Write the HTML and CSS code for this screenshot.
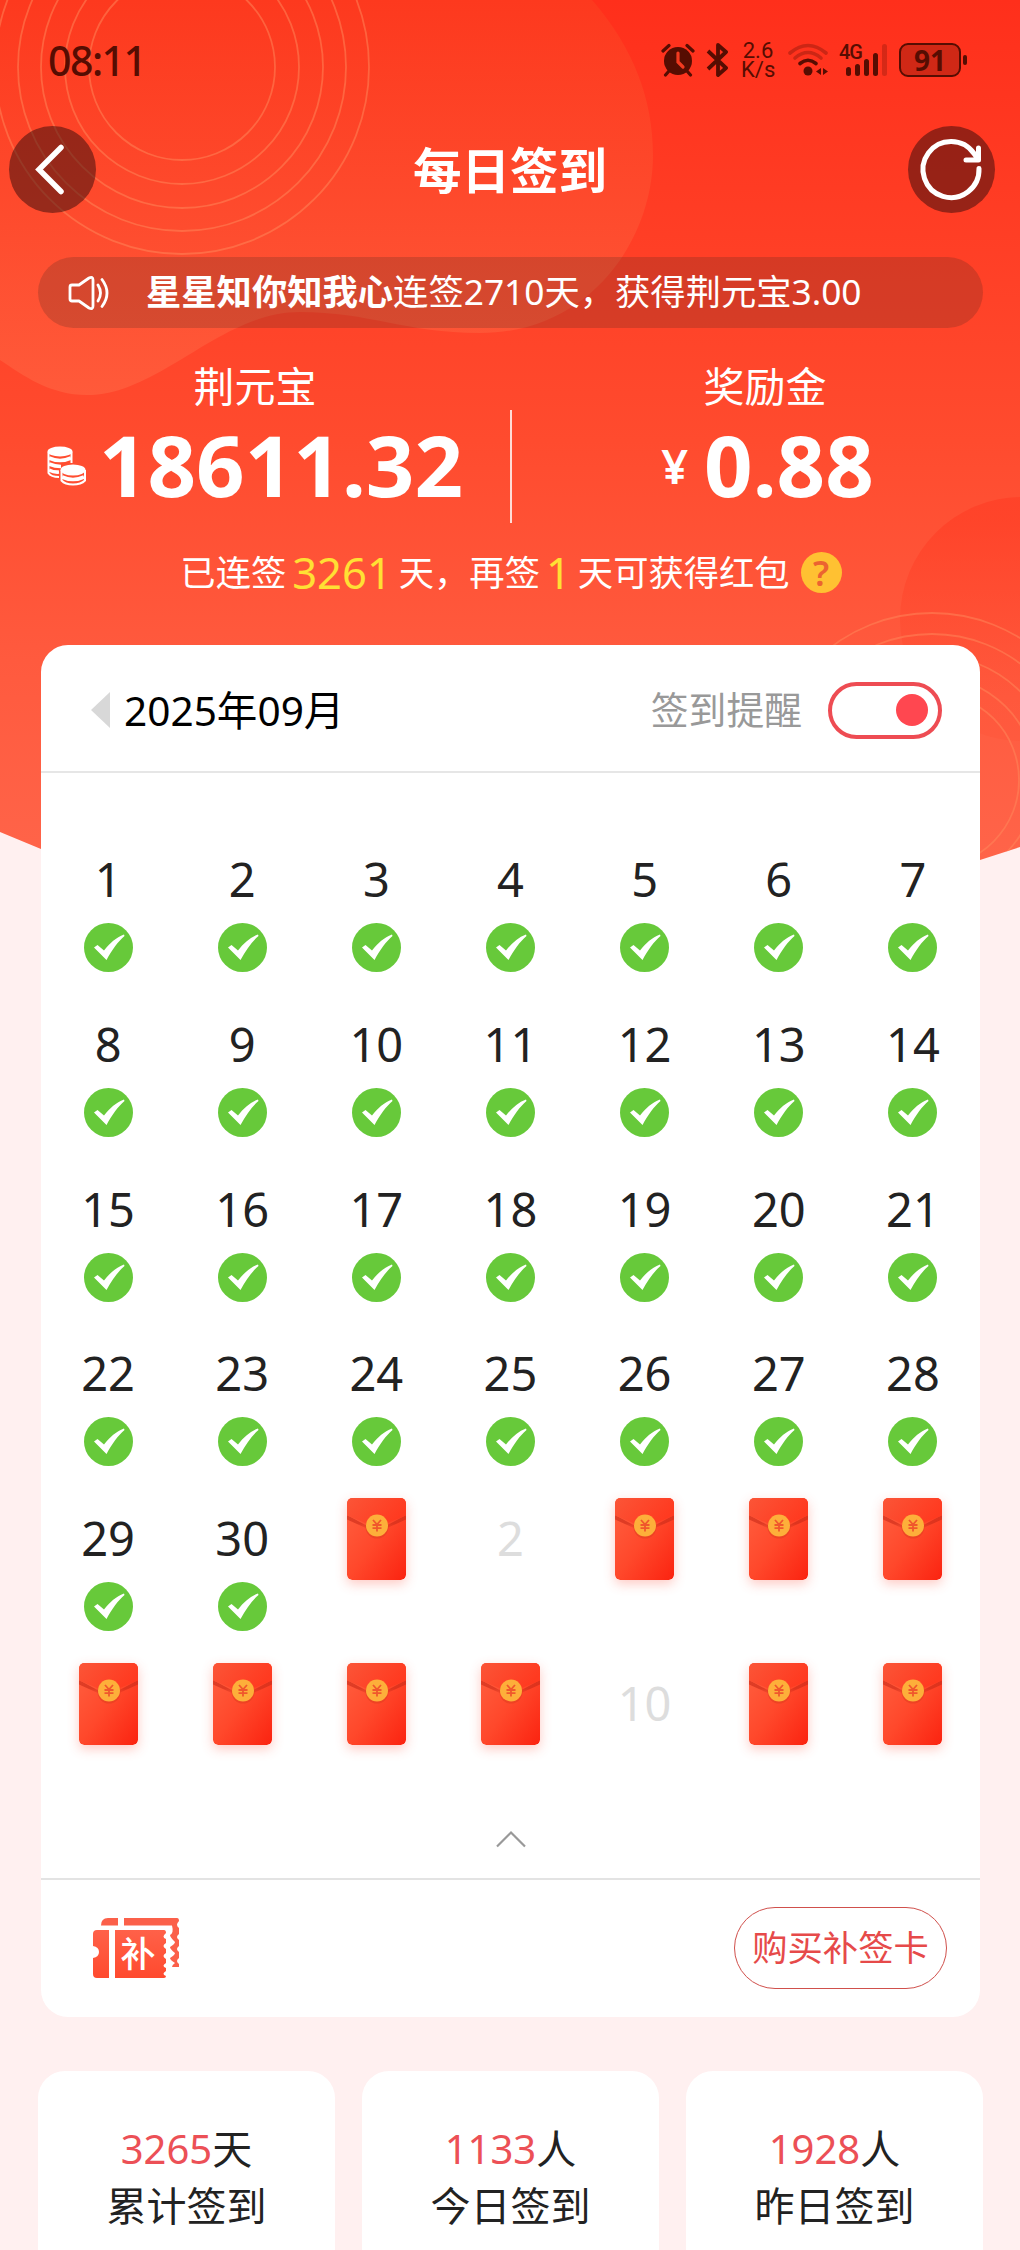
FILE: index.html
```
<!DOCTYPE html>
<html lang="zh-CN">
<head>
    <meta charset="UTF-8">
    <meta name="viewport" content="width=device-width, initial-scale=1.0">
    <title>每日签到</title>
    <link rel="stylesheet" href="styles.css">
</head>
<body>
    <svg class="defs" width="0" height="0">
        <defs>
            <linearGradient id="packet" x1="0" y1="0" x2="1" y2="1">
                <stop offset="0" stop-color="#ff6040"/>
                <stop offset="0.5" stop-color="#ff482b"/>
                <stop offset="1" stop-color="#fb2310"/>
            </linearGradient>
            <linearGradient id="flap" x1="0" y1="0" x2="1" y2="0.4">
                <stop offset="0" stop-color="#fb5537"/>
                <stop offset="1" stop-color="#ff3a20"/>
            </linearGradient>
            <linearGradient id="fold" x1="0" y1="0" x2="0" y2="1">
                <stop offset="0.6" stop-color="#c92a18" stop-opacity="0.6"/>
                <stop offset="1" stop-color="#c92a18" stop-opacity="0.1"/>
            </linearGradient>
        </defs>
        <symbol id="check" viewBox="0 0 49 49">
            <circle cx="24.5" cy="24.5" r="24.5" fill="#67c93a"/>
            <path d="M10 24.5L13.500 22L20 27.500C26 20 32 14.500 40 11.500L40.500 13C34 18.500 28 27 22.500 37Z" fill="#fff"/>
        </symbol>
        <symbol id="redpacket" viewBox="0 0 59 82">
            <rect width="59" height="82" rx="5" fill="url(#packet)"/>
            <path d="M0 17L22 29H37L59 17V21.500L38 31H21L0 21.500Z" fill="url(#fold)"/>
            <path d="M0 5Q0 0 5 0H54Q59 0 59 5V17.500L36 27H23L0 17.500Z" fill="url(#flap)"/>
            <circle cx="30" cy="29" r="11.500" fill="#e2401f" opacity="0.6"/>
            <circle cx="30" cy="27.500" r="11" fill="#fdaf3a"/>
            <path d="M26 22L30 26.500L34 22M30 26.500V33.500M25.500 27H34.500M25.500 30.200H34.500" fill="none" stroke="#f0572c" stroke-width="1.800"/>
        </symbol>
    </svg>

    <div class="page">
        <svg class="backdrop" viewBox="0 0 1020 880" width="1020" height="880">
            <defs>
                <linearGradient id="red" x1="0" y1="0" x2="0" y2="1">
                    <stop offset="0" stop-color="#ff2f1b"/>
                    <stop offset="0.5" stop-color="#ff4b2e"/>
                    <stop offset="0.75" stop-color="#ff5a3e"/>
                    <stop offset="1" stop-color="#ff654a"/>
                </linearGradient>
                <linearGradient id="blob" x1="0" y1="0" x2="0" y2="1">
                    <stop offset="0" stop-color="#fd391e"/>
                    <stop offset="1" stop-color="#ff5a3a"/>
                </linearGradient>
                <linearGradient id="moon" x1="0" y1="0" x2="0" y2="1">
                    <stop offset="0.1" stop-color="#ff3a22" stop-opacity="0.55"/>
                    <stop offset="0.85" stop-color="#ff4a2e" stop-opacity="0.2"/>
                </linearGradient>
                <clipPath id="edge"><path d="M0 0H1020V847L980 860Q510 1000 41 849L0 832Z"/></clipPath>
            </defs>
            <g clip-path="url(#edge)">
                <rect width="1020" height="880" fill="url(#red)"/>
                <path d="M0 0H592C634 48 653 100 653 155C653 240 590 333 480 333C405 333 370 312 300 312C220 312 160 395 87 395C50 395 24 376 0 360Z" fill="url(#blob)"/>
                <circle cx="1022" cy="619" r="122" fill="url(#moon)"/>
                <g class="rings">
                    <circle cx="182" cy="67" r="93"/>
                    <circle cx="182" cy="67" r="117"/>
                    <circle cx="182" cy="67" r="141"/>
                    <circle cx="182" cy="67" r="164"/>
                    <circle cx="182" cy="67" r="187"/>
                    <circle cx="932" cy="780" r="167"/>
                    <circle cx="932" cy="780" r="146"/>
                    <circle cx="932" cy="780" r="125"/>
                    <circle cx="932" cy="780" r="104"/>
                    <circle cx="932" cy="780" r="87"/>
                </g>
            </g>
        </svg>

        <div class="statusbar">
            <span class="clock">08:11</span>
            <div class="indicators">
                <svg width="34" height="34" viewBox="0 0 34 34">
                    <circle cx="17" cy="18" r="14" fill="currentColor"/>
                    <path d="M2 8L8 2.500M26 2.500L32 8M8 28L4.500 32M26 28L29.500 32" stroke="currentColor" stroke-width="3.200" stroke-linecap="round"/>
                    <path d="M17 10V19L22 24" fill="none" stroke="#f23a20" stroke-width="3.200" stroke-linecap="round"/>
                </svg>
                <svg class="bt" width="22" height="34" viewBox="0 0 22 34">
                    <path d="M2 8L20 25L12 32V2L20 9L2 26" fill="none" stroke="currentColor" stroke-width="3.800" stroke-linejoin="round"/>
                </svg>
                <div class="speed"><p>2.6</p><p>K/s</p></div>
                <svg class="wifi" width="42" height="34" viewBox="0 0 42 34">
                    <g fill="none" stroke="currentColor" stroke-width="3.600" stroke-linecap="round">
                        <path d="M3 10Q21 -5 39 10" opacity="0.3"/>
                        <path d="M8 15Q21 4 34 15" opacity="0.3"/>
                        <path d="M13 20.500Q21 14 29 20.500"/>
                    </g>
                    <circle cx="21" cy="28" r="4.500" fill="currentColor"/>
                    <path d="M34 25V32L29 28.500ZM36 25V32L41 28.500Z" fill="currentColor"/>
                </svg>
                <div class="signal">
                    <span>4G</span>
                    <i></i><i></i><i></i><i></i><i></i>
                </div>
                <div class="battery">91</div>
            </div>
        </div>

        <div class="nav">
            <button class="round">
                <svg width="87" height="87" viewBox="0 0 87 87"><path d="M52 21.500L30 43.500L52 65.500" fill="none" stroke="#fff" stroke-width="5.500" stroke-linecap="round"/></svg>
            </button>
            <h1>每日签到</h1>
            <button class="round">
                <svg width="87" height="87" viewBox="0 0 87 87"><path d="M71 42.500A28 28 0 1 1 66 27.500L70 33M70.500 22V34H58" fill="none" stroke="#fff" stroke-width="5" stroke-linecap="round" stroke-linejoin="round"/></svg>
            </button>
        </div>

        <div class="notice">
            <svg width="44" height="36" viewBox="0 0 44 36">
                <path d="M3 12Q3 10 5 10H12L22 3Q26 1 26 5V31Q26 35 22 33L12 26H5Q3 26 3 24ZM31 10Q36 18 31 26M35 4.500Q45 18 35 31.500" fill="none" stroke="#fff" stroke-width="2.800" stroke-linecap="round" stroke-linejoin="round"/>
            </svg>
            <p><b>星星知你知我心</b><span>连签2710天，获得荆元宝3.00</span></p>
        </div>

        <div class="balance">
            <div class="account">
                <h2>荆元宝</h2>
                <div class="amount">
                    <svg class="coins" width="40" height="40" viewBox="0 0 40 40">
                        <path d="M1.500 6V27Q4 31 12 31M24.500 6V17" fill="none" stroke="#fff" stroke-width="2"/>
                        <ellipse cx="13" cy="5.500" rx="12.500" ry="5" fill="#fff"/>
                        <path d="M2 12Q13 17 24 12M2 18Q8 20.500 14 20.500M2 24Q7 26.500 12 26" fill="none" stroke="#fff" stroke-width="3.600"/>
                        <path d="M14.500 24V34.500Q18 38.500 26 38.500T38 34.500V24" fill="none" stroke="#fff" stroke-width="2"/>
                        <ellipse cx="26" cy="24" rx="12.500" ry="5.500" fill="#fff"/>
                        <path d="M15 31Q26 36 37 31" fill="none" stroke="#fff" stroke-width="3.600"/>
                    </svg>
                    <strong>18611.32</strong>
                </div>
            </div>
            <div class="account">
                <h2>奖励金</h2>
                <div class="amount"><span class="yen">¥</span><strong>0.88</strong></div>
            </div>
        </div>

        <div class="streak">已连签<em>3261</em>天，再签<em>1</em>天可获得红包<span class="help">?</span></div>

        <div class="card">
            <div class="card-head">
                <i class="prev"></i>
                <span class="month">2025年09月</span>
                <span class="remind">签到提醒</span>
                <span class="switch"></span>
            </div>
            <div class="calendar" id="calendar"></div>
            <div class="fold">
                <svg width="32" height="18" viewBox="0 0 32 18"><path d="M2 16.500L16 2.500L30 16.500" fill="none" stroke="#999" stroke-width="2.200"/></svg>
            </div>
            <div class="card-foot">
                <svg width="88" height="62" viewBox="0 0 88 62">
                    <defs>
                        <linearGradient id="ticket" x1="0" y1="0" x2="0" y2="1">
                            <stop offset="0" stop-color="#ff6149"/>
                            <stop offset="1" stop-color="#ff4a2e"/>
                        </linearGradient>
                    </defs>
                    <path d="M9 8.500Q9 1 16 1H26V8.500ZM32 1H85Q87 1 87 4Q83 8 87 11V17Q83 20 87 23V29Q83 32 87 35V41Q83 44 87 47V50H80Q80 48 83 46Q78 43 78 41Q83 38 83 36Q78 32 78 30Q83 27 83 25Q78 20 78 18Q82 16 80 8.500H32Z" fill="#fb604a"/>
                    <path d="M5 13H17V61H5Q1 61 1 57V41Q7 40 7 35T1 29V17Q1 13 5 13ZM23 13H72Q74 13 74 16Q69 20 74 22V26Q69 29 74 32V36Q69 39 74 42V46Q69 49 74 51V54Q69 57 74 59Q74 61 72 61H23Z" fill="url(#ticket)"/>
                    <text class="ticket-text" x="46" y="50">补</text>
                </svg>
                <button class="buy">购买补签卡</button>
            </div>
        </div>

        <div class="stats">
            <div class="stat"><p><em>3265</em>天</p><p>累计签到</p></div>
            <div class="stat"><p><em>1133</em>人</p><p>今日签到</p></div>
            <div class="stat"><p><em>1928</em>人</p><p>昨日签到</p></div>
        </div>
    </div>

    <script>
        const calendar = document.getElementById("calendar");
        // days of next month without a red packet
        const plain = [2, 10];

        function addDay(html) {
            const day = document.createElement("div");
            day.className = "day";
            day.innerHTML = html;
            calendar.appendChild(day);
        }

        for (let i = 1; i <= 30; i++) {
            addDay('<span>' + i + '</span><svg class="check"><use href="#check"/></svg>');
        }
        for (let i = 1; i <= 12; i++) {
            if (plain.includes(i)) {
                addDay('<span class="next">' + i + '</span>');
            } else {
                addDay('<svg class="packet"><use href="#redpacket"/></svg>');
            }
        }
    </script>
</body>
</html>
```
FILE: styles.css
```
* {
    box-sizing: border-box;
    margin: 0;
    padding: 0;
}
body {
    width: 1020px;
    height: 2250px;
    overflow: hidden;
    background: #fff0f0;
    font-family: "Noto Sans", "Noto Sans CJK SC", sans-serif;
    color: #222;
}
em {
    font-style: normal;
}
svg {
    display: block;
    flex-shrink: 0;
}
button {
    font-family: inherit;
    border: none;
}
.defs {
    position: absolute;
}
.page {
    position: relative;
    height: 2250px;
    overflow: hidden;
}
.backdrop {
    position: absolute;
    top: 0;
    left: 0;
    z-index: -1;
}
.rings {
    fill: none;
    stroke: #ff8a5c;
    stroke-opacity: 0.5;
    stroke-width: 1.8;
}

/* status bar */
.statusbar {
    display: flex;
    justify-content: space-between;
    align-items: center;
    height: 119px;
    padding: 0 59px 0 48px;
    color: #560d02;
}
.clock {
    font-size: 41px;
    font-weight: 500;
    letter-spacing: -1.5px;
}
.indicators {
    display: flex;
    align-items: center;
}
.bt {
    margin-left: 11px;
}
.speed {
    width: 34px;
    margin-left: 13px;
    font-family: Roboto, sans-serif;
    font-size: 22px;
    line-height: 19px;
    text-align: center;
}
.wifi {
    margin-left: 12px;
}
.signal {
    position: relative;
    display: flex;
    align-items: flex-end;
    gap: 4px;
    height: 32px;
    margin-left: 17px;
}
.signal span {
    position: absolute;
    left: -7px;
    top: -1px;
    font-family: Roboto, sans-serif;
    font-size: 20px;
    font-weight: 500;
    line-height: 19px;
    letter-spacing: -1px;
}
.signal i {
    width: 5px;
    height: 9px;
    border-radius: 3px;
    background: currentColor;
}
.signal i:nth-of-type(2) { height: 12px; }
.signal i:nth-of-type(3) { height: 17px; }
.signal i:nth-of-type(4) { height: 23px; }
.signal i:nth-of-type(5) { height: 32px; opacity: 0.25; }
.battery {
    position: relative;
    width: 62px;
    height: 34px;
    margin-left: 12px;
    border: 2px solid currentColor;
    border-radius: 9px;
    background: rgba(86, 13, 2, 0.28);
    font-size: 28px;
    font-weight: 700;
    line-height: 30px;
    text-align: center;
}
.battery::after {
    content: "";
    position: absolute;
    right: -8px;
    top: 10px;
    width: 4px;
    height: 10px;
    border-radius: 2px;
    background: currentColor;
}

/* title row */
.nav {
    display: flex;
    justify-content: space-between;
    align-items: center;
    height: 87px;
    margin-top: 7px;
    padding: 0 25px 0 9px;
    color: #fff;
}
.nav h1 {
    padding-left: 16px;
    font-size: 48.5px;
    line-height: 60px;
}
.round {
    width: 87px;
    height: 87px;
    border-radius: 50%;
    background: rgba(48, 10, 10, 0.5);
}

.notice {
    display: flex;
    align-items: center;
    width: 945px;
    height: 71px;
    margin: 44px 0 0 38px;
    padding-left: 29px;
    border-radius: 36px;
    background: rgba(50, 35, 30, 0.2);
    color: #fff;
    font-size: 35.3px;
    line-height: 50px;
}
.notice p {
    display: flex;
    margin: -4px 0 0 35px;
}

/* balance */
.balance {
    display: flex;
    margin-top: 33px;
    color: #fff;
    text-align: center;
}
.account {
    width: 511px;
}
.account + .account {
    position: relative;
}
.account + .account::before {
    content: "";
    position: absolute;
    left: 0;
    top: 49px;
    width: 2px;
    height: 113px;
    background: rgba(255, 255, 255, 0.8);
}
.account h2 {
    font-size: 41px;
    font-weight: 400;
    line-height: 50px;
}
.amount {
    display: flex;
    justify-content: center;
    align-items: center;
    height: 84px;
    margin-top: 11px;
}
.amount strong {
    font-size: 85px;
    line-height: 84px;
}
.coins {
    margin: 4px 12px 0 0;
}
.yen {
    margin-right: 16px;
    padding-top: 3px;
    font-size: 47px;
    font-weight: 600;
    line-height: 84px;
}
.account + .account .amount {
    padding-left: 5px;
}
.streak {
    display: flex;
    justify-content: center;
    align-items: center;
    height: 50px;
    margin-top: 41px;
    padding-left: 2px;
    color: #fff;
    font-size: 35.3px;
    line-height: 50px;
}
.streak em {
    margin: 0 7px 0 6px;
    color: #ffe034;
    font-size: 43.5px;
}
.help {
    width: 41px;
    height: 41px;
    margin-left: 11px;
    border-radius: 50%;
    background: #ffc132;
    color: #ec6330;
    font-size: 35px;
    font-weight: 600;
    line-height: 41px;
    text-align: center;
}

/* calendar card */
.card {
    width: 939px;
    height: 1372px;
    margin: 48px 0 0 41px;
    border-radius: 27px;
    background: #fff;
}
.card-head {
    display: flex;
    align-items: center;
    height: 128px;
    padding: 4px 38px 0 50px;
    border-bottom: 2px solid #e6e6e6;
}
.prev {
    border: 18px solid transparent;
    border-right: 19px solid #d8d8d8;
    border-left: 0;
}
.month {
    margin: -4px 0 0 14px;
    color: #000;
    font-size: 40.6px;
}
.remind {
    margin: -5px 0 0 auto;
    color: #999;
    font-size: 37.8px;
}
.switch {
    display: flex;
    justify-content: flex-end;
    align-items: center;
    width: 114px;
    height: 57px;
    margin-left: 26px;
    padding-right: 10px;
    border: 4px solid #ee4c53;
    border-radius: 29px;
}
.switch::after {
    content: "";
    width: 32px;
    height: 32px;
    border-radius: 50%;
    background: #ff4750;
}
.calendar {
    display: grid;
    grid-template-columns: repeat(7, 1fr);
    grid-auto-rows: 164.8px;
    padding-top: 65px;
}
.day {
    display: flex;
    flex-direction: column;
    align-items: center;
}
.day span {
    font-size: 47px;
    line-height: 82px;
}
.day .next {
    color: #ddd;
}
.check {
    width: 49px;
    height: 49px;
    margin-top: 3px;
}
.packet {
    width: 59px;
    height: 82px;
    margin-top: 1px;
    border-radius: 5px;
    box-shadow: 0 4px 12px rgba(255, 80, 60, 0.3);
}
.fold {
    display: flex;
    justify-content: center;
    height: 51px;
    padding-top: 3px;
}
.card-foot {
    display: flex;
    justify-content: space-between;
    align-items: center;
    height: 139px;
    padding: 0 33px 0 51px;
    border-top: 2px solid #e3e3e3;
}
.ticket-text {
    fill: #fff;
    font-size: 35px;
    font-weight: 500;
    text-anchor: middle;
}
.buy {
    width: 213px;
    height: 82px;
    padding-bottom: 6px;
    border: 1px solid #d0504c;
    border-radius: 41px;
    background: #fff;
    color: #e64a4a;
    font-size: 35.3px;
}

.stats {
    display: flex;
    justify-content: space-between;
    margin: 54px 37px 0 38px;
}
.stat {
    width: 297px;
    height: 220px;
    padding-top: 49px;
    border-radius: 27px;
    background: #fff;
    font-size: 40px;
    line-height: 57px;
    text-align: center;
}
.stat em {
    color: #ec5056;
}
```
